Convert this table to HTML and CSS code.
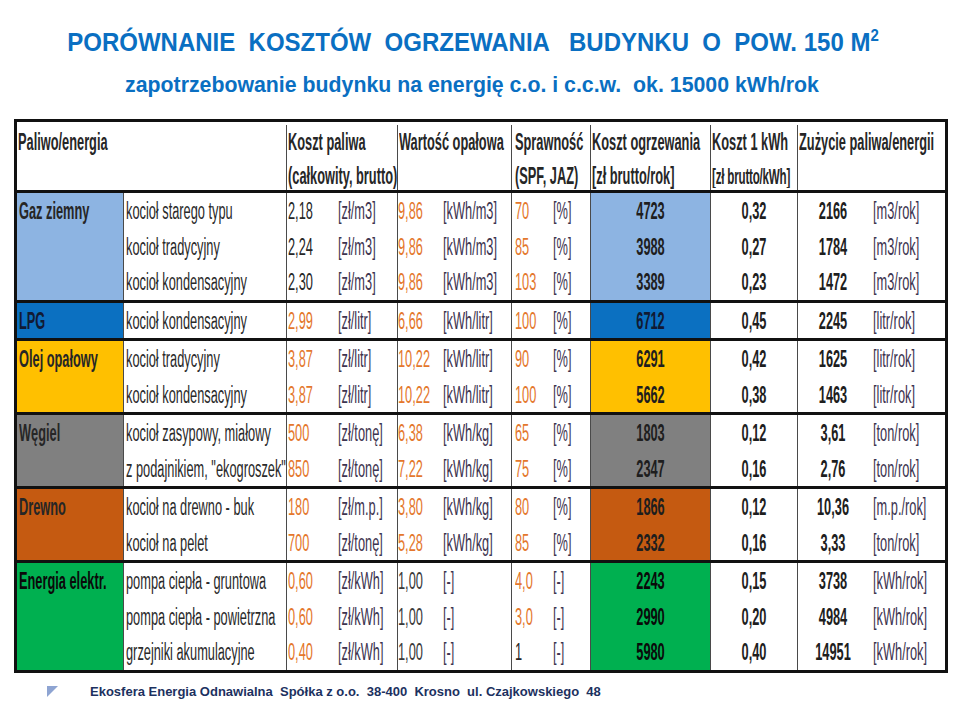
FILE: index.html
```html
<!DOCTYPE html>
<html lang="pl">
<head>
<meta charset="utf-8">
<link rel="stylesheet" href="styles.css">
</head>
<body>
<div class="slide">
  <h1 class="title">PORÓWNANIE  KOSZTÓW  OGRZEWANIA   BUDYNKU  O  POW. 150 M<sup>2</sup></h1>
  <h2 class="subtitle">zapotrzebowanie budynku na energię c.o. i c.c.w.  ok. 15000 kWh/rok</h2>

  <div class="table">
    <div class="head">
      <div class="hc w12"><div class="ln">Paliwo/energia</div></div>
      <div class="hc w3 sep"><div class="ln">Koszt paliwa</div><div class="ln sub">(całkowity, brutto)</div></div>
      <div class="hc w4 sep"><div class="ln">Wartość opałowa</div></div>
      <div class="hc w5 sep pl3"><div class="ln">Sprawność</div><div class="ln sub">(SPF, JAZ)</div></div>
      <div class="hc w6 sep"><div class="ln">Koszt ogrzewania</div><div class="ln sub">[zł brutto/rok]</div></div>
      <div class="hc w7 sep"><div class="ln">Koszt 1 kWh</div><div class="ln sub small">[zł brutto/kWh]</div></div>
      <div class="hc w8 sep"><div class="ln">Zużycie paliwa/energii</div></div>
    </div>

    <div class="grp">
      <div class="col w1 name gaz"><div class="ln">Gaz ziemny</div></div>
      <div class="col w2 sep desc"><div class="ln">kocioł starego typu</div><div class="ln">kocioł tradycyjny</div><div class="ln">kocioł kondensacyjny</div></div>
      <div class="col w3 sep vu c3">
        <div class="ln"><span class="v">2,18</span><span class="u">[zł/m3]</span></div>
        <div class="ln"><span class="v">2,24</span><span class="u">[zł/m3]</span></div>
        <div class="ln"><span class="v">2,30</span><span class="u">[zł/m3]</span></div>
      </div>
      <div class="col w4 sep vu c4">
        <div class="ln"><span class="v o">9,86</span><span class="u">[kWh/m3]</span></div>
        <div class="ln"><span class="v o">9,86</span><span class="u">[kWh/m3]</span></div>
        <div class="ln"><span class="v o">9,86</span><span class="u">[kWh/m3]</span></div>
      </div>
      <div class="col w5 sep vu c5">
        <div class="ln"><span class="v o">70</span><span class="u">[%]</span></div>
        <div class="ln"><span class="v o">85</span><span class="u">[%]</span></div>
        <div class="ln"><span class="v o">103</span><span class="u">[%]</span></div>
      </div>
      <div class="col w6 sep num gaz"><div class="ln">4723</div><div class="ln">3988</div><div class="ln">3389</div></div>
      <div class="col w7 sep num"><div class="ln">0,32</div><div class="ln">0,27</div><div class="ln">0,23</div></div>
      <div class="col w8 sep vu c8">
        <div class="ln"><span class="v">2166</span><span class="u">[m3/rok]</span></div>
        <div class="ln"><span class="v">1784</span><span class="u">[m3/rok]</span></div>
        <div class="ln"><span class="v">1472</span><span class="u">[m3/rok]</span></div>
      </div>
    </div>

    <div class="grp">
      <div class="col w1 name lpg"><div class="ln">LPG</div></div>
      <div class="col w2 sep desc"><div class="ln">kocioł kondensacyjny</div></div>
      <div class="col w3 sep vu c3"><div class="ln"><span class="v o">2,99</span><span class="u">[zł/litr]</span></div></div>
      <div class="col w4 sep vu c4"><div class="ln"><span class="v o">6,66</span><span class="u">[kWh/litr]</span></div></div>
      <div class="col w5 sep vu c5"><div class="ln"><span class="v o">100</span><span class="u">[%]</span></div></div>
      <div class="col w6 sep num lpg"><div class="ln">6712</div></div>
      <div class="col w7 sep num"><div class="ln">0,45</div></div>
      <div class="col w8 sep vu c8"><div class="ln"><span class="v">2245</span><span class="u">[litr/rok]</span></div></div>
    </div>

    <div class="grp">
      <div class="col w1 name olej"><div class="ln">Olej opałowy</div></div>
      <div class="col w2 sep desc"><div class="ln">kocioł tradycyjny</div><div class="ln">kocioł kondensacyjny</div></div>
      <div class="col w3 sep vu c3">
        <div class="ln"><span class="v o">3,87</span><span class="u">[zł/litr]</span></div>
        <div class="ln"><span class="v o">3,87</span><span class="u">[zł/litr]</span></div>
      </div>
      <div class="col w4 sep vu c4">
        <div class="ln"><span class="v o">10,22</span><span class="u">[kWh/litr]</span></div>
        <div class="ln"><span class="v o">10,22</span><span class="u">[kWh/litr]</span></div>
      </div>
      <div class="col w5 sep vu c5">
        <div class="ln"><span class="v o">90</span><span class="u">[%]</span></div>
        <div class="ln"><span class="v o">100</span><span class="u">[%]</span></div>
      </div>
      <div class="col w6 sep num olej"><div class="ln">6291</div><div class="ln">5662</div></div>
      <div class="col w7 sep num"><div class="ln">0,42</div><div class="ln">0,38</div></div>
      <div class="col w8 sep vu c8">
        <div class="ln"><span class="v">1625</span><span class="u">[litr/rok]</span></div>
        <div class="ln"><span class="v">1463</span><span class="u">[litr/rok]</span></div>
      </div>
    </div>

    <div class="grp">
      <div class="col w1 name wegiel"><div class="ln">Węgiel</div></div>
      <div class="col w2 sep desc"><div class="ln">kocioł zasypowy, miałowy</div><div class="ln">z podajnikiem, "ekogroszek"</div></div>
      <div class="col w3 sep vu c3">
        <div class="ln"><span class="v o">500</span><span class="u">[zł/tonę]</span></div>
        <div class="ln"><span class="v o">850</span><span class="u">[zł/tonę]</span></div>
      </div>
      <div class="col w4 sep vu c4">
        <div class="ln"><span class="v o">6,38</span><span class="u">[kWh/kg]</span></div>
        <div class="ln"><span class="v o">7,22</span><span class="u">[kWh/kg]</span></div>
      </div>
      <div class="col w5 sep vu c5">
        <div class="ln"><span class="v o">65</span><span class="u">[%]</span></div>
        <div class="ln"><span class="v o">75</span><span class="u">[%]</span></div>
      </div>
      <div class="col w6 sep num wegiel"><div class="ln">1803</div><div class="ln">2347</div></div>
      <div class="col w7 sep num"><div class="ln">0,12</div><div class="ln">0,16</div></div>
      <div class="col w8 sep vu c8">
        <div class="ln"><span class="v">3,61</span><span class="u">[ton/rok]</span></div>
        <div class="ln"><span class="v">2,76</span><span class="u">[ton/rok]</span></div>
      </div>
    </div>

    <div class="grp">
      <div class="col w1 name drewno"><div class="ln">Drewno</div></div>
      <div class="col w2 sep desc"><div class="ln">kocioł na drewno - buk</div><div class="ln">kocioł na pelet</div></div>
      <div class="col w3 sep vu c3">
        <div class="ln"><span class="v o">180</span><span class="u">[zł/m.p.]</span></div>
        <div class="ln"><span class="v o">700</span><span class="u">[zł/tonę]</span></div>
      </div>
      <div class="col w4 sep vu c4">
        <div class="ln"><span class="v o">3,80</span><span class="u">[kWh/kg]</span></div>
        <div class="ln"><span class="v o">5,28</span><span class="u">[kWh/kg]</span></div>
      </div>
      <div class="col w5 sep vu c5">
        <div class="ln"><span class="v o">80</span><span class="u">[%]</span></div>
        <div class="ln"><span class="v o">85</span><span class="u">[%]</span></div>
      </div>
      <div class="col w6 sep num drewno"><div class="ln">1866</div><div class="ln">2332</div></div>
      <div class="col w7 sep num"><div class="ln">0,12</div><div class="ln">0,16</div></div>
      <div class="col w8 sep vu c8">
        <div class="ln"><span class="v">10,36</span><span class="u">[m.p./rok]</span></div>
        <div class="ln"><span class="v">3,33</span><span class="u">[ton/rok]</span></div>
      </div>
    </div>

    <div class="grp">
      <div class="col w1 name prad"><div class="ln">Energia elektr.</div></div>
      <div class="col w2 sep desc"><div class="ln">pompa ciepła - gruntowa</div><div class="ln">pompa ciepła - powietrzna</div><div class="ln">grzejniki akumulacyjne</div></div>
      <div class="col w3 sep vu c3">
        <div class="ln"><span class="v o">0,60</span><span class="u">[zł/kWh]</span></div>
        <div class="ln"><span class="v o">0,60</span><span class="u">[zł/kWh]</span></div>
        <div class="ln"><span class="v o">0,40</span><span class="u">[zł/kWh]</span></div>
      </div>
      <div class="col w4 sep vu c4">
        <div class="ln"><span class="v g">1,00</span><span class="u">[-]</span></div>
        <div class="ln"><span class="v g">1,00</span><span class="u">[-]</span></div>
        <div class="ln"><span class="v g">1,00</span><span class="u">[-]</span></div>
      </div>
      <div class="col w5 sep vu c5">
        <div class="ln"><span class="v o">4,0</span><span class="u">[-]</span></div>
        <div class="ln"><span class="v o">3,0</span><span class="u">[-]</span></div>
        <div class="ln"><span class="v">1</span><span class="u">[-]</span></div>
      </div>
      <div class="col w6 sep num prad"><div class="ln">2243</div><div class="ln">2990</div><div class="ln">5980</div></div>
      <div class="col w7 sep num"><div class="ln">0,15</div><div class="ln">0,20</div><div class="ln">0,40</div></div>
      <div class="col w8 sep vu c8">
        <div class="ln"><span class="v">3738</span><span class="u">[kWh/rok]</span></div>
        <div class="ln"><span class="v">4984</span><span class="u">[kWh/rok]</span></div>
        <div class="ln"><span class="v">14951</span><span class="u">[kWh/rok]</span></div>
      </div>
    </div>
  </div>

  <footer class="footer">
    <svg class="bullet" width="11" height="11" viewBox="0 0 11 11"><polygon points="0,0 11,0 0,11" fill="#8ea4d2"/></svg>
    <span class="foot-text">Ekosfera Energia Odnawialna  Spółka z o.o.  38-400  Krosno  ul. Czajkowskiego  48</span>
  </footer>
</div>
</body>
</html>
```

FILE: styles.css
```css
* { box-sizing: border-box; }
html, body { margin: 0; padding: 0; background: #fff; }
body { font-family: "Liberation Sans", Arial, sans-serif; }

.slide { width: 960px; height: 720px; display: flex; flex-direction: column; }

.title {
  margin: 30px 0 0 0;
  padding-right: 14px;
  text-align: center;
  white-space: pre;
  font-size: 24px;
  line-height: 24px;
  font-weight: bold;
  color: #0a6fc2;
  transform: scaleY(1.08);
}
.title sup { font-size: 15px; line-height: 0; vertical-align: 9px; }

.subtitle {
  margin: 20px 0 0 0;
  padding-right: 16px;
  text-align: center;
  white-space: pre;
  font-size: 21.3px;
  line-height: 22px;
  font-weight: bold;
  color: #0a6fc2;
  transform: scaleY(1.0);
}

.table {
  margin: 23px 0 0 14px;
  width: 934px;
  border: 3px solid #111;
  font-size: 12.8px;
  color: #262626;
}

.ln {
  height: 35.5px;
  line-height: 35.5px;
  white-space: nowrap;
  transform: scaleY(1.9);
}

.head { display: flex; height: 71px; border-bottom: 3px solid #111; padding-top: 3px; }
.hc { font-weight: bold; padding-left: 1px; }
.hc .ln { height: 34px; line-height: 34px; }
.hc.pl3 { padding-left: 3px; }
.hc .small { font-size: 11.6px; letter-spacing: -0.2px; }

.sep { border-left: 1px solid #4a4a4a; }
.w1 { width: 106px; }
.w12 { width: 269px; }
.w2 { width: 163px; }
.w3 { width: 111px; }
.w4 { width: 114px; }
.w5 { width: 79px; }
.w6 { width: 120px; }
.w7 { width: 87px; }
.w8 { flex: 1; }

.grp { display: flex; border-top: 3px solid #111; }
.head + .grp { border-top: none; }

.name { font-weight: bold; padding-left: 2px; }
.desc { padding-left: 2px; color: #2a2a2a; }

.vu .ln { display: flex; }
.vu .v { display: block; }
.vu .u { display: block; color: #3d3450; }
.c3 { padding-left: 1px; }
.c3 .v { width: 50px; }
.c4 .v { width: 45px; }
.c5 { padding-left: 3px; }
.c5 .v { width: 38px; }
.c8 .v { width: 70px; text-align: center; font-weight: bold; color: #1e1e1e; }
.c8 .u { margin-left: 5px; }

.o { color: #e4772c; }
.g { color: #3a3a3a; }

.num { text-align: center; font-weight: bold; color: #1e1e1e; }

.gaz { background: #8db4e2; }
.lpg { background: #0b70c1; color: #111a33; }
.olej { background: #ffc000; }
.wegiel { background: #808080; }
.drewno { background: #c55a11; }
.prad { background: #00b050; color: #0a0a0a; }

.footer {
  display: flex;
  align-items: center;
  margin: 11px 0 0 47px;
}
.bullet { display: block; }
.foot-text {
  margin-left: 32px;
  white-space: pre;
  font-size: 13px;
  font-weight: bold;
  color: #1c3160;
}
```
